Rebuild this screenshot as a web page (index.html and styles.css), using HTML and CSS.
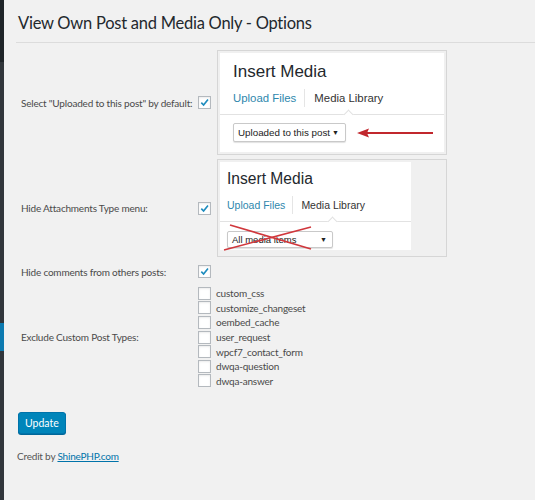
FILE: index.html
```html
<!DOCTYPE html>
<html lang="en">
<head>
  <meta charset="UTF-8" />
  <title>View Own Post and Media Only - Options</title>
  <link rel="stylesheet" href="styles.css">
</head>
<body>
  <div class="admin">
    <div class="sidebar"><span class="current"></span></div>

    <div class="wrap">
      <h1>View Own Post and Media Only - Options</h1>

      <form class="form-table">
        <div class="row row-media">
          <div class="label">Select "Uploaded to this post" by default:</div>
          <div class="cell-check"><span class="check on"><svg viewBox="0 0 12 12"><path d="M2.5 6.2 L5 8.7 L9.8 2.8" /></svg></span></div>
          <div class="shot shot-one">
            <div class="panel">
              <div class="modal-title">Insert Media</div>
              <div class="tabs">
                <span class="tab tab-link">Upload Files</span>
                <span class="tab tab-active">Media Library</span>
              </div>
              <div class="toolbar">
                <span class="dropdown">Uploaded to this post <i>&#9660;</i></span>
                <svg class="arrow" width="78" height="10" viewBox="0 0 78 10">
                  <path d="M10 5 H76" stroke="#c1272d" stroke-width="2" />
                  <path d="M0 5 L12 0.5 L10 5 L12 9.5 Z" fill="#c1272d" />
                </svg>
              </div>
            </div>
          </div>
        </div>

        <div class="row row-media row-two">
          <div class="label">Hide Attachments Type menu:</div>
          <div class="cell-check"><span class="check on"><svg viewBox="0 0 12 12"><path d="M2.5 6.2 L5 8.7 L9.8 2.8" /></svg></span></div>
          <div class="shot shot-two">
            <div class="panel">
              <div class="modal-title">Insert Media</div>
              <div class="tabs">
                <span class="tab tab-link">Upload Files</span>
                <span class="tab tab-active">Media Library</span>
              </div>
              <div class="toolbar">
                <span class="dropdown">All media items <i>&#9660;</i></span>
                <svg class="cross" width="92" height="30" viewBox="0 0 92 30">
                  <path d="M7 2 L88 26" stroke="#d0373c" stroke-width="1.6" />
                  <path d="M1 27 L88 4" stroke="#d0373c" stroke-width="1.6" />
                </svg>
              </div>
            </div>
          </div>
        </div>

        <div class="row row-small">
          <div class="label">Hide comments from others posts:</div>
          <div class="cell-check"><span class="check on"><svg viewBox="0 0 12 12"><path d="M2.5 6.2 L5 8.7 L9.8 2.8" /></svg></span></div>
        </div>

        <div class="row row-types">
          <div class="label">Exclude Custom Post Types:</div>
          <ul class="type-list">
            <li><span class="check"></span>custom_css</li>
            <li><span class="check"></span>customize_changeset</li>
            <li><span class="check"></span>oembed_cache</li>
            <li><span class="check"></span>user_request</li>
            <li><span class="check"></span>wpcf7_contact_form</li>
            <li><span class="check"></span>dwqa-question</li>
            <li><span class="check"></span>dwqa-answer</li>
          </ul>
        </div>

        <div class="submit">
          <button type="button" class="button-primary">Update</button>
        </div>
      </form>

      <p class="credit">Credit by <a href="#">ShinePHP.com</a></p>
    </div>
  </div>
</body>
</html>
```

FILE: styles.css
```css
* {
  box-sizing: border-box;
}

body {
  margin: 0;
  padding: 0;
  background-color: #f1f1f1;
  font-family: 'Lato', 'Open Sans', sans-serif;
  color: #444;
}

.admin {
  display: flex;
  min-height: 500px;
}

.sidebar {
  position: relative;
  width: 4px;
  flex-shrink: 0;
  background: linear-gradient(#1f2428 0 62px, #31363b 62px);
}

.sidebar .current {
  position: absolute;
  left: 0;
  top: 323px;
  width: 4px;
  height: 28px;
  background-color: #0d7ab0;
}

.wrap {
  flex: 1;
  padding: 0 0 0 14px;
}

h1 {
  margin: 0;
  padding: 12px 0 8px;
  font-size: 16.5px;
  font-weight: 400;
  line-height: 22px;
  letter-spacing: -0.25px;
  color: #23282d;
  border-bottom: 1px solid #dcdcdc;
  margin-left: -2px;
  padding-left: 2px;
}

.form-table {
  display: flex;
  flex-direction: column;
  padding-top: 7px;
}

.row {
  display: grid;
  grid-template-columns: 180px 19px 1fr;
  align-items: center;
}

.row-two {
  margin-top: 4px;
}

.row-small {
  margin-top: 8px;
}

.row-types {
  margin-top: 8px;
}

.label {
  padding-left: 3px;
  font-size: 10px;
  letter-spacing: -0.2px;
  color: #4a4a4a;
}

.check {
  display: inline-flex;
  align-items: center;
  justify-content: center;
  width: 13px;
  height: 13px;
  background-color: #fff;
  border: 1px solid #b4b9be;
  box-shadow: inset 0 1px 2px rgba(0, 0, 0, 0.08);
  vertical-align: middle;
}

.check svg {
  width: 11px;
  height: 11px;
}

.check path {
  fill: none;
  stroke: #1e8cbe;
  stroke-width: 1.8;
}

.cell-check {
  display: flex;
}

/* screenshots of the media modal */
.shot {
  width: 230px;
  background-color: #f0f0f0;
  border: 1px solid #d6d6d6;
  padding: 2px;
}

.panel {
  background-color: #fff;
}

.modal-title {
  color: #23282d;
  font-family: 'Liberation Sans', Arial, sans-serif;
}

.tabs {
  display: flex;
  align-items: center;
  position: relative;
  font-family: 'Liberation Sans', Arial, sans-serif;
  border-bottom: 1px solid #e2e2e2;
}

.tab-link {
  color: #2e87ad;
}

.tab-active {
  color: #333;
  border-left: 1px solid #e5e5e5;
}

.tabs::after {
  content: "";
  position: absolute;
  bottom: -4px;
  width: 6px;
  height: 6px;
  background-color: #fff;
  border-top: 1px solid #e2e2e2;
  border-left: 1px solid #e2e2e2;
  transform: rotate(45deg);
}

.toolbar {
  display: flex;
  align-items: center;
  position: relative;
}

.dropdown {
  display: flex;
  align-items: center;
  justify-content: space-between;
  font-family: 'Liberation Sans', Arial, sans-serif;
  color: #222;
  background-color: #fff;
  border: 1px solid #c9c9c9;
  border-radius: 2px;
  box-shadow: 0 1px 1px rgba(0, 0, 0, 0.12);
}

.dropdown i {
  font-style: normal;
  font-size: 7px;
  color: #222;
}

.shot-one .panel {
  height: 99px;
  padding: 0;
}

.shot-one .modal-title {
  font-size: 17px;
  line-height: 20px;
  padding: 9px 0 0 13px;
}

.shot-one .tabs {
  height: 33px;
  font-size: 11.4px;
  padding-left: 13px;
}

.shot-one .tab-link {
  padding-right: 8px;
}

.shot-one .tab-active {
  padding: 3px 0 3px 9px;
}

.shot-one .tabs::after {
  left: 125px;
}

.shot-one .toolbar {
  padding: 8px 0 0 13px;
}

.shot-one .dropdown {
  width: 113px;
  height: 19px;
  font-size: 9.8px;
  padding: 0 6px 0 4px;
}

.shot-one .arrow {
  margin-left: 11px;
}

.shot-two .panel {
  width: 191px;
  height: 88px;
  margin-bottom: 4px;
}

.shot-two .modal-title {
  font-size: 15.6px;
  line-height: 18px;
  padding: 8px 0 0 7px;
}

.shot-two .tabs {
  height: 34px;
  font-size: 10.5px;
  padding-left: 7px;
}

.shot-two .tab-link {
  padding-right: 7px;
}

.shot-two .tab-active {
  padding: 3px 0 3px 8px;
}

.shot-two .tabs::after {
  left: 109px;
}

.shot-two .toolbar {
  padding: 9px 0 0 7px;
}

.shot-two .dropdown {
  width: 106px;
  height: 17px;
  font-size: 9.5px;
  padding: 0 5px 0 4px;
}

.shot-two .cross {
  position: absolute;
  left: 3px;
  top: 1px;
}

/* post type checkboxes */
.type-list {
  grid-column: 2 / 4;
  list-style: none;
  margin: 0;
  padding: 0;
}

.type-list li {
  display: flex;
  align-items: center;
  gap: 5px;
  height: 14.6px;
  font-size: 10px;
  letter-spacing: -0.2px;
  color: #4a4a4a;
}

.submit {
  padding-top: 23px;
}

.button-primary {
  height: 22px;
  padding: 0 6px;
  font-family: 'Lato', sans-serif;
  font-size: 10.5px;
  color: #fff;
  background-color: #0085ba;
  border: 1px solid #0073aa;
  border-radius: 3px;
  box-shadow: 0 1px 0 #006799;
  margin-left: 0;
}

.credit {
  margin: 16px 0 0 -1px;
  font-size: 10px;
  letter-spacing: -0.2px;
  color: #555;
}

.credit a {
  color: #0073aa;
}
```
